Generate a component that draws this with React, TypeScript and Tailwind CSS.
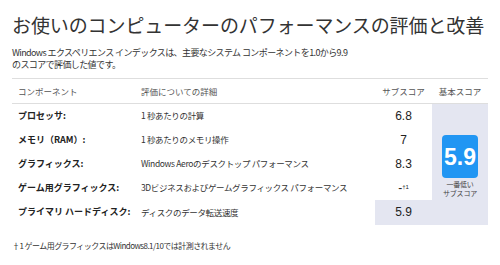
import React from "react";

const rows = [
  { label: "プロセッサ:", detail: "1 秒あたりの計算", score: "6.8" },
  { label: "メモリ（RAM）:", detail: "1 秒あたりのメモリ操作", score: "7" },
  { label: "グラフィックス:", detail: "Windows Aeroのデスクトップ パフォーマンス", score: "8.3" },
  { label: "ゲーム用グラフィックス:", detail: "3Dビジネスおよびゲームグラフィックス パフォーマンス", score: "-" },
  { label: "プライマリ ハードディスク:", detail: "ディスクのデータ転送速度", score: "5.9" },
];

const jp = { fontFamily: '"Noto Sans CJK JP", "Noto Sans", sans-serif' };
const num = { fontFamily: '"Liberation Sans", Arial, sans-serif' };

export default function App() {
  return (
    <div className="h-[265px] w-[500px] bg-white px-3 pt-[11px] text-[#333]" style={jp}>
      <h1 className="text-[19px] leading-[28px] font-normal tracking-[-0.1px]">
        お使いのコンピューターのパフォーマンスの評価と改善
      </h1>
      <p className="mt-[8px] text-[9px] leading-[12px] tracking-[-0.6px]">
        Windows エクスペリエンス インデックスは、主要なシステム コンポーネントを1.0から9.9
        <br />
        のスコアで評価した値です。
      </p>
      <table className="mt-[7px] w-[476px] table-fixed border-collapse">
        <colgroup>
          <col className="w-[123px]" />
          <col className="w-[240px]" />
          <col className="w-[57px]" />
          <col className="w-[56px]" />
        </colgroup>
        <thead>
          <tr className="h-[25px] border-y border-[#dedede] text-[8.5px] text-[#555]">
            <th className="pl-[6px] text-left font-normal">コンポーネント</th>
            <th className="pl-[6px] text-left font-normal">評価についての詳細</th>
            <th className="text-center font-normal">サブスコア</th>
            <th className="text-center font-normal">基本スコア</th>
          </tr>
        </thead>
        <tbody>
          {rows.map((r, i) => (
            <tr key={r.label} className={i === 4 ? "h-[25px]" : "h-[24px]"}>
              <td className="pl-[6px] text-[9px] font-bold whitespace-nowrap text-[#222]">{r.label}</td>
              <td className="pl-[6px] text-[8.5px] tracking-[-0.35px] whitespace-nowrap">{r.detail}</td>
              <td
                className={`text-center text-[12px] text-[#222] ${i === 4 ? "bg-[#e4e6f1]" : ""}`}
                style={num}
              >
                {r.score}
                {r.score === "-" && <sup className="text-[6px]">†1</sup>}
              </td>
              {i === 0 && (
                <td rowSpan={5} className="bg-[#e4e6f1] align-middle">
                  <div className="flex flex-col items-center pt-[4px]">
                    <div
                      className="flex h-[43px] w-[36px] shrink-0 items-center justify-center rounded-[4px] bg-[#2196f3] text-[23px] font-bold text-white"
                      style={num}
                    >
                      5.9
                    </div>
                    <div className="mt-[2px] text-center text-[7px] leading-[8.5px] tracking-[-0.2px] text-[#444]">
                      <div>一番低い</div>
                      <div>サブスコア</div>
                    </div>
                  </div>
                </td>
              )}
            </tr>
          ))}
        </tbody>
      </table>
      <p className="mt-[15px] text-[8px] leading-[12px] tracking-[-0.55px]">
        †1 ゲーム用グラフィックスはWindows8.1/10では計測されません
      </p>
    </div>
  );
}
